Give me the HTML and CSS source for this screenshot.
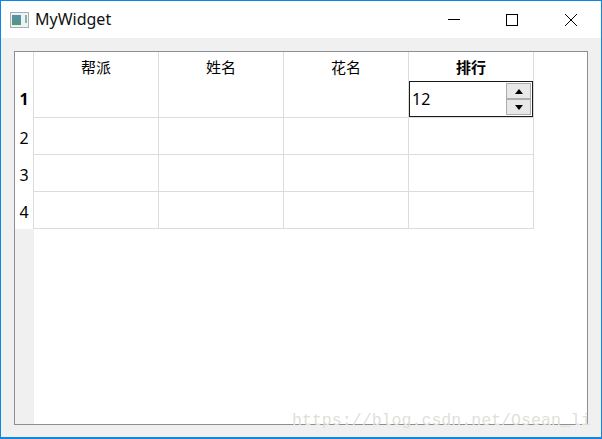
FILE: index.html
```html
<!DOCTYPE html>
<html lang="en">
<head>
    <meta charset="UTF-8">
    <title>MyWidget</title>
    <link rel="stylesheet" href="styles.css">
</head>
<body>
    <div class="window">
        <div class="titlebar">
            <svg class="app-icon" width="20" height="16" viewBox="0 0 20 16">
                <defs>
                    <linearGradient id="pane" x1="0" y1="0" x2="0" y2="1">
                        <stop offset="0" stop-color="#5b8fae"/>
                        <stop offset="1" stop-color="#4f9a78"/>
                    </linearGradient>
                </defs>
                <rect x="0.5" y="0.5" width="18" height="15" fill="#eef2f3" stroke="#a9b0b4"/>
                <rect x="2" y="3" width="9" height="10" fill="url(#pane)"/>
                <rect x="15" y="3" width="2" height="8" fill="#86b5ac"/>
            </svg>
            <span class="app-title">MyWidget</span>
            <div class="win-buttons">
                <svg class="win-btn" width="46" height="14" viewBox="0 0 46 14"><path d="M17 6.5h12" stroke="#000" fill="none"/></svg>
                <svg class="win-btn" width="46" height="14" viewBox="0 0 46 14"><rect x="17.5" y="1.5" width="11" height="11" stroke="#000" fill="none"/></svg>
                <svg class="win-btn close" width="46" height="14" viewBox="0 0 46 14"><path d="M17 1l12 12M29 1L17 13" stroke="#000" fill="none"/></svg>
            </div>
        </div>
        <div class="content">
            <div class="table-frame">
                <div class="row-head-col">
                    <div class="corner"></div>
                    <div class="row-head active">1</div>
                    <div class="row-head">2</div>
                    <div class="row-head">3</div>
                    <div class="row-head">4</div>
                </div>
                <div class="grid">
                    <div class="col-head">帮派</div>
                    <div class="col-head">姓名</div>
                    <div class="col-head">花名</div>
                    <div class="col-head active">排行</div>

                    <div class="cell"></div>
                    <div class="cell"></div>
                    <div class="cell"></div>
                    <div class="cell">
                        <div class="spinbox">
                            <span class="spin-value">12</span>
                            <div class="spin-btns">
                                <div class="spin-btn"><span class="arrow-up"></span></div>
                                <div class="spin-btn"><span class="arrow-down"></span></div>
                            </div>
                        </div>
                    </div>

                    <div class="cell"></div>
                    <div class="cell"></div>
                    <div class="cell"></div>
                    <div class="cell"></div>

                    <div class="cell"></div>
                    <div class="cell"></div>
                    <div class="cell"></div>
                    <div class="cell"></div>

                    <div class="cell"></div>
                    <div class="cell"></div>
                    <div class="cell"></div>
                    <div class="cell"></div>
                </div>
            </div>
        </div>
        <div class="watermark">https://blog.csdn.net/Osean_li</div>
    </div>
</body>
</html>
```

FILE: styles.css
```css
html, body {
    margin: 0;
    padding: 0;
}
body {
    background: #f0f0f0;
    font-family: "Noto Sans", "Noto Sans CJK SC", sans-serif;
    color: #000;
    overflow: hidden;
}
.window {
    position: relative;
    box-sizing: border-box;
    width: 602px;
    height: 439px;
    border: 1px solid #0f86e0;
    border-bottom-width: 2px;
    display: flex;
    flex-direction: column;
}
.titlebar {
    height: 37px;
    background: #fff;
    display: flex;
    align-items: center;
    padding-left: 9px;
    flex: none;
}
.app-icon {
    margin-right: 5px;
}
.app-title {
    font-size: 16px;
    line-height: 20px;
    margin-bottom: 2px;
    color: #111;
}
.win-buttons {
    margin-left: auto;
    margin-right: 7px;
    display: flex;
    gap: 12px;
}
.win-btn {
    display: block;
}
.win-btn.close {
    margin-left: 1px;
}
.content {
    flex: 1;
    background: #f0f0f0;
    padding: 13px 13px 12px 13px;
    display: flex;
}
.table-frame {
    flex: 1;
    background: #fff;
    border: 1px solid #8a8f96;
    display: flex;
}
.row-head-col {
    width: 19px;
    background: #f0f0f0;
    flex: none;
    align-self: stretch;
}
.corner {
    box-sizing: border-box;
    height: 29px;
    background: #fff;
    border-right: 1px solid #dcdcdc;
}
.row-head {
    height: 37px;
    background: #fff;
    border-right: 1px solid #dcdcdc;
    font-size: 16px;
    display: flex;
    align-items: center;
    justify-content: center;
    box-sizing: border-box;
    padding-top: 2px;
}
.row-head.active {
    font-weight: 700;
    padding-top: 0;
    padding-bottom: 2px;
}
.grid {
    display: grid;
    grid-template-columns: repeat(4, 125px);
    grid-template-rows: 29px repeat(4, 37px);
    align-content: start;
}
.col-head {
    box-sizing: border-box;
    font-size: 15px;
    line-height: 28px;
    padding-top: 1px;
    text-align: center;
    border-right: 1px solid #dcdcdc;
    height: 29px;
}
.col-head.active {
    font-weight: 700;
}
.cell {
    box-sizing: border-box;
    border-right: 1px solid #dcdcdc;
    border-bottom: 1px solid #dcdcdc;
    height: 37px;
}
.spinbox {
    box-sizing: border-box;
    width: 124px;
    height: 36px;
    border: 1px solid #1a1a1a;
    background: #fff;
    display: flex;
    align-items: center;
    justify-content: space-between;
    padding: 0 1px 0 2px;
}
.spin-value {
    font-size: 16px;
}
.spin-btns {
    display: flex;
    flex-direction: column;
    width: 25px;
    height: 32px;
}
.spin-btn {
    flex: 1;
    box-sizing: border-box;
    background: #e8e8e8;
    border: 1px solid #adadad;
    display: flex;
    align-items: center;
    justify-content: center;
}
.arrow-up, .arrow-down {
    width: 0;
    height: 0;
    border-left: 4px solid transparent;
    border-right: 4px solid transparent;
}
.arrow-up {
    border-bottom: 5px solid #000;
}
.arrow-down {
    border-top: 5px solid #000;
}
.watermark {
    position: absolute;
    left: 291px;
    top: 411px;
    font-family: "Liberation Mono", monospace;
    font-size: 16.6px;
    line-height: 18px;
    color: #dfdfd8;
    white-space: nowrap;
}
```
